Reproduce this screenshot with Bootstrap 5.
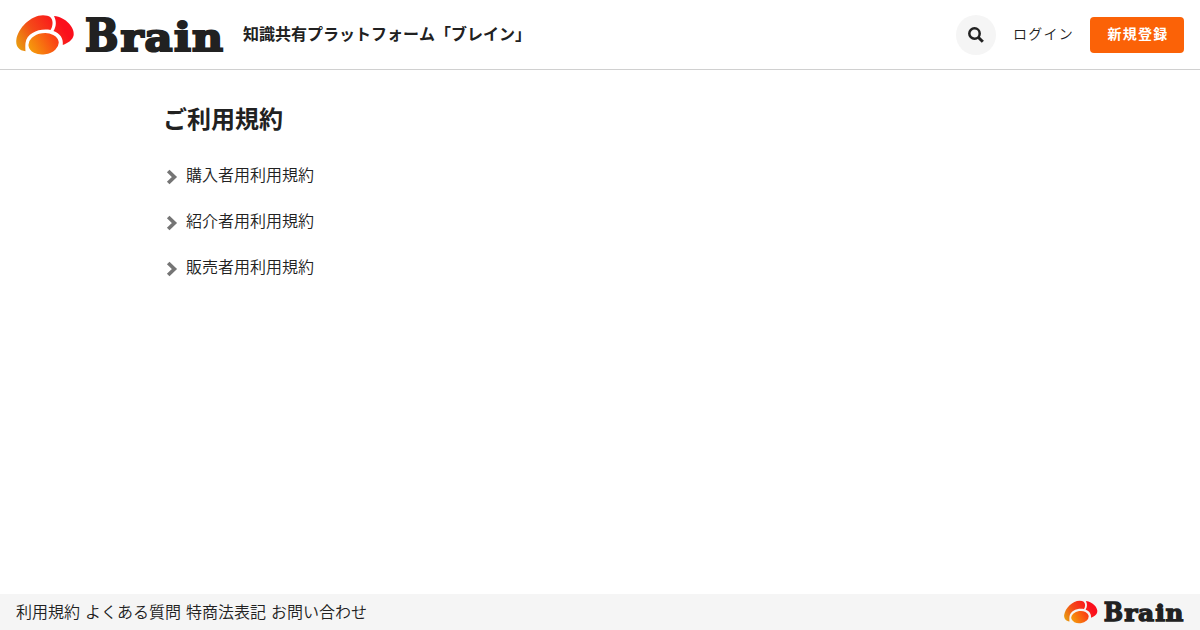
<!DOCTYPE html>
<html lang="ja">
<head>
  <meta charset="UTF-8">
  <meta name="viewport" content="width=device-width, initial-scale=1.0">
  <title>ご利用規約 | Brain</title>
  <!-- Bootstrap CSS -->
  <link href="https://cdn.jsdelivr.net/npm/bootstrap@5.3.0/dist/css/bootstrap.min.css" rel="stylesheet">
  <style>
    body {
      font-family: "Noto Sans CJK JP", sans-serif;
      font-size: 16px;
      font-weight: 350;
      color: #212121;
    }
    a {
      color: inherit;
      text-decoration: none;
    }
    .site-header {
      height: 70px;
      border-bottom: 1px solid #d0d0d0;
    }
    .header-logo {
      width: 208px;
      height: 40px;
    }
    .tagline {
      margin-left: 19px;
      padding-bottom: 3px;
      font-size: 16px;
      font-weight: 700;
      font-kerning: none;
    }
    .search-btn {
      width: 40px;
      height: 40px;
      background-color: #f5f5f5;
    }
    .login-link {
      margin: 0 16px 0 17px;
      padding-bottom: 2px;
      font-size: 14px;
      letter-spacing: 1.25px;
    }
    .signup-btn,
    .signup-btn:hover {
      width: 94px;
      height: 36px;
      padding: 0 0 0 2px;
      border: 0;
      border-radius: 4px;
      background-color: #fb6207;
      color: #fff;
      font-size: 14px;
      font-weight: 700;
      line-height: 33px;
      letter-spacing: 1.25px;
    }
    .terms-body {
      width: 900px;
      padding: 30px 13px 0;
    }
    .terms-title {
      font-size: 24px;
      font-weight: 700;
      line-height: 36px;
      margin-bottom: 15px;
    }
    .terms-list a {
      height: 46px;
    }
    .terms-list svg {
      margin: 5px 8px 0 3px;
    }
    .site-footer {
      height: 36px;
      background-color: #f5f5f5;
    }
    .footer-links {
      gap: 5px;
      padding-bottom: 2px;
    }
    .footer-logo {
      width: 120px;
      height: 24px;
    }
  </style>
</head>
<body class="d-flex flex-column vh-100 overflow-hidden">
  <!-- Shared logo -->
  <svg width="0" height="0" class="position-absolute" aria-hidden="true">
    <defs>
      <linearGradient id="lobeGradient" gradientUnits="userSpaceOnUse" x1="3" y1="36" x2="46" y2="10">
        <stop offset="0" stop-color="#e8a010"/>
        <stop offset="0.45" stop-color="#f44a18"/>
        <stop offset="1" stop-color="#fb0f1c"/>
      </linearGradient>
      <linearGradient id="coreGradient" gradientUnits="userSpaceOnUse" x1="14" y1="34" x2="42" y2="24">
        <stop offset="0" stop-color="#f59a0c"/>
        <stop offset="1" stop-color="#fb3a16"/>
      </linearGradient>
      <symbol id="brainLogo" viewBox="0 0 208 40">
        <g fill="url(#lobeGradient)">
          <path d="M9.500 36.300C2.500 35.500-.3 31 .3 25 2 13 15 .3 27 .3 34 .4 37 3 36.500 9c-.2 2.500-1 4.500-2 6C24 13 11 17.500 9.500 28c-.3 3-.2 6 0 8.300Z"/>
          <path d="M38 1C50 2 59 13 57.700 20c-.9 5-5.700 8-10.900 10C47.500 23 44 18.500 37.500 16 40.500 11 40.500 6 38 1Z"/>
        </g>
        <ellipse cx="27.600" cy="28.800" rx="15.200" ry="10.600" transform="rotate(-8 27.600 28.800)" fill="url(#coreGradient)"/>
        <g font-family="DejaVu Serif, serif" font-weight="700" fill="#212121" stroke="#212121" stroke-width="2.200">
          <text x="69" y="36.200" font-size="44.500" textLength="33.500" lengthAdjust="spacingAndGlyphs">B</text>
          <g font-size="40">
            <text x="104.500" y="36.200" textLength="23" lengthAdjust="spacingAndGlyphs">r</text>
            <text x="128.500" y="36.200" textLength="28" lengthAdjust="spacingAndGlyphs">a</text>
            <text x="158" y="36.200" textLength="17" lengthAdjust="spacingAndGlyphs">i</text>
            <text x="176" y="36.200" textLength="31" lengthAdjust="spacingAndGlyphs">n</text>
          </g>
        </g>
      </symbol>
      <symbol id="chevron" viewBox="0 0 12 16">
        <path d="M2.200 2 8.400 8l-6.200 6" fill="none" stroke="#757575" stroke-width="3.700"/>
      </symbol>
    </defs>
  </svg>

  <header class="site-header d-flex align-items-center px-3 flex-shrink-0">
    <a href="#" class="d-flex" aria-label="Brain"><svg class="header-logo"><use href="#brainLogo"/></svg></a>
    <span class="tagline">知識共有プラットフォーム「ブレイン」</span>
    <div class="d-flex align-items-center ms-auto">
      <a href="#" class="search-btn rounded-circle d-flex align-items-center justify-content-center" aria-label="検索">
        <svg width="16" height="16" viewBox="0 0 16 16" fill="none" stroke="#212121">
          <circle cx="6.500" cy="6.500" r="5.200" stroke-width="2.500"/>
          <path d="m10.500 10.500 4.300 4.300" stroke-width="3"/>
        </svg>
      </a>
      <a href="#" class="login-link">ログイン</a>
      <a href="#" class="btn signup-btn">新規登録</a>
    </div>
  </header>

  <main class="terms-body mx-auto flex-grow-1">
    <h1 class="terms-title">ご利用規約</h1>
    <nav class="terms-list d-flex flex-column align-items-start">
      <a href="#" class="d-flex align-items-center"><svg width="12" height="16"><use href="#chevron"/></svg>購入者用利用規約</a>
      <a href="#" class="d-flex align-items-center"><svg width="12" height="16"><use href="#chevron"/></svg>紹介者用利用規約</a>
      <a href="#" class="d-flex align-items-center"><svg width="12" height="16"><use href="#chevron"/></svg>販売者用利用規約</a>
    </nav>
  </main>

  <footer class="site-footer d-flex align-items-center justify-content-between px-3 flex-shrink-0">
    <nav class="footer-links d-flex">
      <a href="#">利用規約</a>
      <a href="#">よくある質問</a>
      <a href="#">特商法表記</a>
      <a href="#">お問い合わせ</a>
    </nav>
    <svg class="footer-logo"><use href="#brainLogo"/></svg>
  </footer>

  <script src="https://cdn.jsdelivr.net/npm/bootstrap@5.3.0/dist/js/bootstrap.bundle.min.js"></script>
</body>
</html>
